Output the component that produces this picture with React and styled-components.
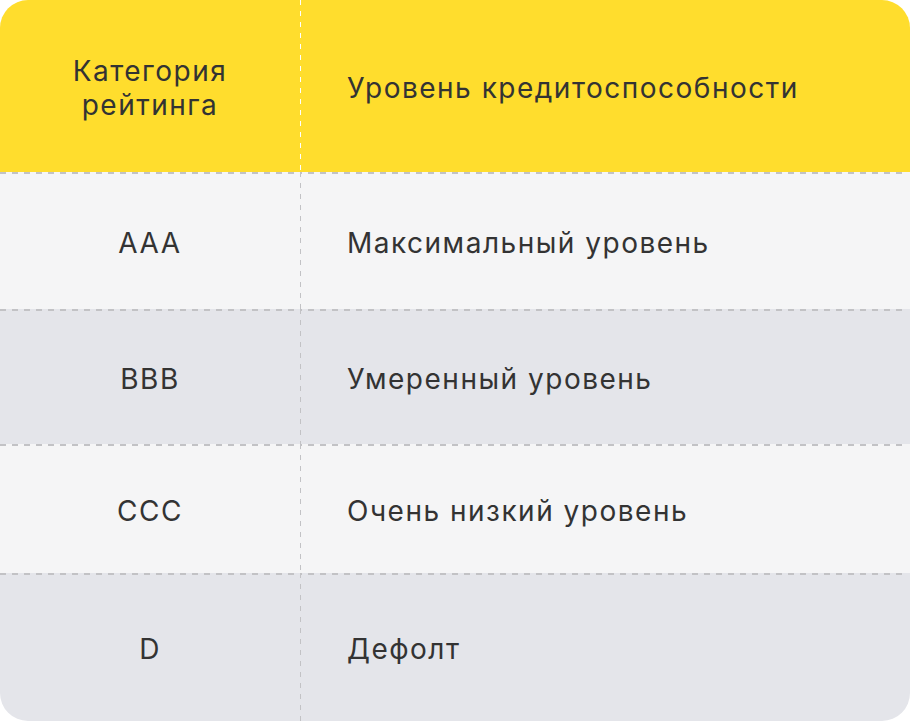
import React from "react";
import styled, { createGlobalStyle } from "styled-components";

const Global = createGlobalStyle`
  html, body { margin: 0; padding: 0; background: #ffffff; }
  body { font-family: Inter, "Noto Sans", sans-serif; -webkit-font-smoothing: antialiased; }
`;

const Table = styled.div`
  width: 910px;
  height: 721px;
  border-radius: 28px;
  overflow: hidden;
  display: grid;
  grid-template-columns: 300px 1fr;
  grid-template-rows: 172px 137px 135px 129px 148px;
  color: #333333;
  font-size: 28px;
  letter-spacing: 1.5px;
`;

const hDash = (c) =>
  `repeating-linear-gradient(to right, ${c} 0 6px, transparent 6px 12px)`;
const vDash = (c) =>
  `repeating-linear-gradient(to bottom, ${c} 0 5px, transparent 5px 11px)`;

const Cell = styled.div`
  display: flex;
  align-items: center;
  justify-content: ${(p) => (p.$first ? "center" : "flex-start")};
  text-align: ${(p) => (p.$first ? "center" : "left")};
  padding: 4px 0 0 ${(p) => (p.$first ? "0" : "47px")};
  line-height: 34px;
  background-color: ${(p) => p.$bg};
  background-image: ${(p) => {
    const layers = [];
    if (p.$top) layers.push(hDash("#c2c2c5"));
    if (!p.$first) layers.push(vDash(p.$head ? "#ffffff" : "#c2c2c5"));
    return layers.length ? layers.join(", ") : "none";
  }};
  background-size: ${(p) => {
    const s = [];
    if (p.$top) s.push("100% 2px");
    if (!p.$first) s.push("2px 100%");
    return s.join(", ") || "auto";
  }};
  background-position: ${(p) => {
    const s = [];
    if (p.$top) s.push(p.$first ? "0 0" : "-4px 0");
    if (!p.$first) s.push("-1px 0");
    return s.join(", ") || "0 0";
  }};
  background-repeat: no-repeat;
`;

const rows = [
  ["AAA", "Максимальный уровень", "#f5f5f6"],
  ["BBB", "Умеренный уровень", "#e4e5ea"],
  ["CCC", "Очень низкий уровень", "#f5f5f6"],
  ["D", "Дефолт", "#e4e5ea"],
];

export default function App() {
  return (
    <>
      <Global />
      <Table>
        <Cell $first $head $bg="#ffdd2d">
          Категория
          <br />
          рейтинга
        </Cell>
        <Cell $head $bg="#ffdd2d">Уровень кредитоспособности</Cell>
        {rows.map(([a, b, bg]) => (
          <React.Fragment key={a}>
            <Cell $first $top $bg={bg}>{a}</Cell>
            <Cell $top $bg={bg}>{b}</Cell>
          </React.Fragment>
        ))}
      </Table>
    </>
  );
}
